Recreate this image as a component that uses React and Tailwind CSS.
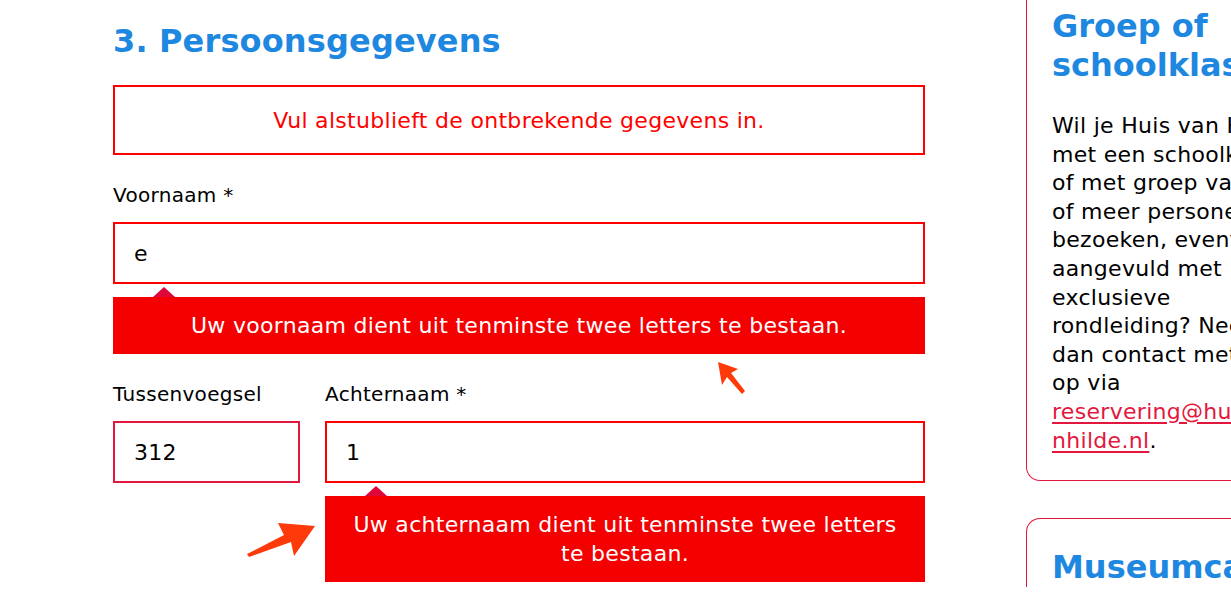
import React from 'react';

const font = { fontFamily: '"DejaVu Sans", Verdana, sans-serif' };

function Tip({ children }) {
  return (
    <div className="relative mt-[13px] bg-[#f40000] text-white text-[22px] tracking-[0.3px] leading-[29px] text-center py-[14px]">
      <span className="absolute -top-[10px] left-[40px] w-0 h-0 border-l-[11px] border-r-[11px] border-b-[10px] border-l-transparent border-r-transparent border-b-[#e0063a]" />
      {children}
    </div>
  );
}

export default function App() {
  return (
    <div style={font} className="relative w-[1231px] h-[596px] overflow-hidden bg-white flex pl-[113px]">
      <main className="w-[812px] shrink-0">
        <h1 className="mt-[21px] text-[32px] tracking-[0.15px] leading-[40px] font-bold text-[#1e88e0]">3. Persoonsgegevens</h1>

        <div className="mt-[24px] h-[70px] border-2 border-[#f00] flex items-center justify-center text-[22px] tracking-[0.3px] text-[#f00]">
          Vul alstublieft de ontbrekende gegevens in.
        </div>

        <label className="block mt-[28px] text-[20px] tracking-[0.3px] leading-[24px] text-black">Voornaam *</label>
        <div className="mt-[15px] h-[62px] border-2 border-[#f00] flex items-center px-[19px] text-[22px] text-black">e</div>
        <Tip>Uw voornaam dient uit tenminste twee letters te bestaan.</Tip>

        <div className="flex gap-[25px] mt-[28px]">
          <div className="w-[187px] shrink-0">
            <label className="block text-[20px] tracking-[0.3px] leading-[24px] text-black">Tussenvoegsel</label>
            <div className="mt-[15px] h-[62px] border-2 border-[#e3173d] flex items-center px-[19px] text-[22px] tracking-[0.3px] text-black">312</div>
          </div>
          <div className="flex-1">
            <label className="block text-[20px] tracking-[0.3px] leading-[24px] text-black">Achternaam *</label>
            <div className="mt-[15px] h-[62px] border-2 border-[#f00] flex items-center px-[19px] text-[22px] text-black">1</div>
            <Tip>
              Uw achternaam dient uit tenminste twee letters
              <br />
              te bestaan.
            </Tip>
          </div>
        </div>
      </main>

      <aside className="ml-[101px] w-[300px] shrink-0">
        <div className="border border-t-0 border-[#e3173d] rounded-bl-[14px] pl-[25px] pt-[7px] pb-[25px]">
          <h2 className="text-[32px] leading-[39px] font-bold text-[#1e88e0] whitespace-nowrap">
            Groep of
            <br />
            schoolklas
          </h2>
          <p className="mt-[27px] text-[22px] tracking-[0.3px] leading-[28.6px] text-black whitespace-nowrap">
            Wil je Huis van Hilde<br />
            met een schoolklas<br />
            of met groep van 10<br />
            of meer personen<br />
            bezoeken, eventueel<br />
            aangevuld met<br />
            exclusieve<br />
            rondleiding? Neem<br />
            dan contact met ons<br />
            op via<br />
            <a className="text-[#e3173d] underline decoration-2 underline-offset-[3px]" href="#">reservering@huisva</a><br />
            <a className="text-[#e3173d] underline decoration-2 underline-offset-[3px]" href="#">nhilde.nl</a>.
          </p>
        </div>
        <div className="mt-[37px] border border-b-0 border-[#e3173d] rounded-tl-[14px] pl-[25px] pt-[29px]">
          <h2 className="text-[32px] leading-[39px] font-bold text-[#1e88e0] whitespace-nowrap">Museumcard</h2>
        </div>
      </aside>

      <svg className="absolute left-0 top-0 pointer-events-none" width="1231" height="596" viewBox="0 0 1231 596">
        <polygon fill="#ff3a0a" points="718,362 738,369 731,373 745,391 742,394 727,377 722,385" />
        <polygon fill="#ff3a0a" points="315,526 294,556 291,542 249,557 247,554 284,535 278,523" />
      </svg>
    </div>
  );
}
